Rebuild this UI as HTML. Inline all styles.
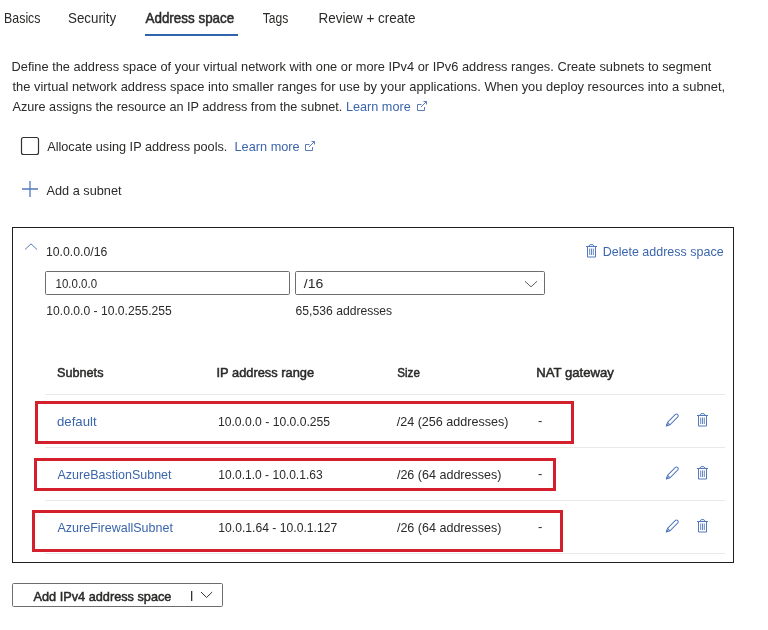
<!DOCTYPE html>
<html><head><meta charset="utf-8"><style>
html,body{margin:0;padding:0;background:#fff;width:768px;height:630px;overflow:hidden}
svg{display:block;will-change:transform;font-family:"Liberation Sans",sans-serif}
</style></head><body>
<svg width="768" height="630" viewBox="0 0 768 630">
<rect x="145" y="34" width="93" height="2" fill="#3064ad"/>
<rect x="21.5" y="137.5" width="17" height="17" rx="2" fill="none" stroke="#323130" stroke-width="1.2"/>
<path d="M22 189 H38 M30 181 V197" stroke="#5279bd" stroke-width="1.3" fill="none"/>
<rect x="12.5" y="227.5" width="721" height="335" fill="none" stroke="#201f1e" stroke-width="1"/>
<path d="M25 249.5 L31 243.8 L37 249.5" stroke="#5279bd" stroke-width="1" fill="none"/>
<rect x="45.5" y="271.5" width="244" height="23" rx="1.2" fill="none" stroke="#6f6d6b" stroke-width="1"/>
<rect x="295.5" y="271.5" width="249" height="23" rx="1.2" fill="none" stroke="#6f6d6b" stroke-width="1"/>
<path d="M525 281.3 L531 286.8 L537 281.3" stroke="#605e5c" stroke-width="1" fill="none"/>
<rect x="45" y="394" width="680" height="1" fill="#e9e9e9"/>
<rect x="45" y="447" width="680" height="1" fill="#e9e9e9"/>
<rect x="45" y="500" width="680" height="1" fill="#e9e9e9"/>
<rect x="45" y="553" width="680" height="1" fill="#e9e9e9"/>
<rect x="36.5" y="402.5" width="536" height="40" fill="none" stroke="#d41f2c" stroke-width="3"/>
<rect x="35.5" y="459.5" width="519" height="30" fill="none" stroke="#d41f2c" stroke-width="3"/>
<rect x="33.5" y="511.5" width="528" height="39" fill="none" stroke="#d41f2c" stroke-width="3"/>
<rect x="12.5" y="583.5" width="210" height="23" rx="1.2" fill="none" stroke="#6f6d6b" stroke-width="1"/>
<rect x="191" y="591" width="1.3" height="10" fill="#323130"/>
<path d="M201 592 L206.6 597.5 L212.2 592" stroke="#323130" stroke-width="1" fill="none"/>
<g transform="translate(586,244)" fill="none" stroke="#5279bd" stroke-width="1">
<path d="M3 2 L4 0.7 H7 L8 2"/><path d="M0 2.5 h11"/><path d="M1.5 2.5 V13 H9.5 V2.5"/>
<path d="M3.7 4.5 V11 M5.5 4.5 V11 M7.3 4.5 V11" stroke-width="0.9"/></g>
<g transform="translate(697,413)" fill="none" stroke="#5279bd" stroke-width="1">
<path d="M3 2 L4 0.7 H7 L8 2"/><path d="M0 2.5 h11"/><path d="M1.5 2.5 V13 H9.5 V2.5"/>
<path d="M3.7 4.5 V11 M5.5 4.5 V11 M7.3 4.5 V11" stroke-width="0.9"/></g>
<g transform="translate(697,466)" fill="none" stroke="#5279bd" stroke-width="1">
<path d="M3 2 L4 0.7 H7 L8 2"/><path d="M0 2.5 h11"/><path d="M1.5 2.5 V13 H9.5 V2.5"/>
<path d="M3.7 4.5 V11 M5.5 4.5 V11 M7.3 4.5 V11" stroke-width="0.9"/></g>
<g transform="translate(697,519)" fill="none" stroke="#5279bd" stroke-width="1">
<path d="M3 2 L4 0.7 H7 L8 2"/><path d="M0 2.5 h11"/><path d="M1.5 2.5 V13 H9.5 V2.5"/>
<path d="M3.7 4.5 V11 M5.5 4.5 V11 M7.3 4.5 V11" stroke-width="0.9"/></g>
<g transform="translate(666.3,426.0) rotate(-45)" fill="none" stroke="#5279bd" stroke-width="1" stroke-linejoin="round">
<path d="M0 0 L3.4 -1.7 H14.6 Q16.2 -1.7 16.2 0 Q16.2 1.7 14.6 1.7 H3.4 Z"/><path d="M3.4 -1.7 V1.7"/><path d="M0.3 0 L2 -0.9 V0.9 Z" fill="#5279bd" stroke-width="0.6"/></g>
<g transform="translate(666.3,479.0) rotate(-45)" fill="none" stroke="#5279bd" stroke-width="1" stroke-linejoin="round">
<path d="M0 0 L3.4 -1.7 H14.6 Q16.2 -1.7 16.2 0 Q16.2 1.7 14.6 1.7 H3.4 Z"/><path d="M3.4 -1.7 V1.7"/><path d="M0.3 0 L2 -0.9 V0.9 Z" fill="#5279bd" stroke-width="0.6"/></g>
<g transform="translate(666.3,532.0) rotate(-45)" fill="none" stroke="#5279bd" stroke-width="1" stroke-linejoin="round">
<path d="M0 0 L3.4 -1.7 H14.6 Q16.2 -1.7 16.2 0 Q16.2 1.7 14.6 1.7 H3.4 Z"/><path d="M3.4 -1.7 V1.7"/><path d="M0.3 0 L2 -0.9 V0.9 Z" fill="#5279bd" stroke-width="0.6"/></g>
<g transform="translate(417,101)" fill="none" stroke="#5d7cb6" stroke-width="1">
<path d="M4.5 3.5 H0.5 V9.5 H7.5 V6"/><path d="M4 6 L9.5 0.5 M6.5 0.5 H9.5 V3.5"/></g>
<g transform="translate(305,141)" fill="none" stroke="#5d7cb6" stroke-width="1">
<path d="M4.5 3.5 H0.5 V9.5 H7.5 V6"/><path d="M4 6 L9.5 0.5 M6.5 0.5 H9.5 V3.5"/></g>
<text transform="translate(4.12,23) scale(0.8823,1)" font-size="14" fill="#2b2a29">Basics</text>
<text transform="translate(68.00,23) scale(0.9541,1)" font-size="14" fill="#2b2a29">Security</text>
<text transform="translate(145.50,23) scale(0.9588,1)" font-size="14" stroke="#2b2a29" stroke-width="0.5" fill="#2b2a29">Address space</text>
<text transform="translate(262.75,23) scale(0.8623,1)" font-size="14" fill="#2b2a29">Tags</text>
<text transform="translate(318.54,23) scale(0.9627,1)" font-size="14" fill="#2b2a29">Review + create</text>
<text transform="translate(11.51,71) scale(0.9870,1)" font-size="13" fill="#2b2a29">Define the address space of your virtual network with one or more IPv4 or IPv6 address ranges. Create subnets to segment</text>
<text transform="translate(12.50,91) scale(0.9918,1)" font-size="13" fill="#2b2a29">the virtual network address space into smaller ranges for use by your applications. When you deploy resources into a subnet,</text>
<text transform="translate(12.50,111) scale(0.9746,1)" font-size="13" fill="#2b2a29">Azure assigns the resource an IP address from the subnet.</text>
<text transform="translate(345.92,111) scale(0.9763,1)" font-size="13" fill="#3b65ac">Learn more</text>
<text transform="translate(47.20,151) scale(0.9762,1)" font-size="13" fill="#2b2a29">Allocate using IP address pools.</text>
<text transform="translate(234.52,151) scale(0.9809,1)" font-size="13" fill="#3b65ac">Learn more</text>
<text transform="translate(46.50,194.5) scale(0.9805,1)" font-size="13" fill="#2b2a29">Add a subnet</text>
<text transform="translate(46.00,255.7) scale(0.9425,1)" font-size="13" fill="#2b2a29">10.0.0.0/16</text>
<text transform="translate(602.74,255.8) scale(0.9622,1)" font-size="13" fill="#3b65ac">Delete address space</text>
<text transform="translate(55.60,288.3) scale(0.8833,1)" font-size="13" fill="#2b2a29">10.0.0.0</text>
<text transform="translate(303.80,288) scale(1.0817,1)" font-size="13" fill="#2b2a29">/16</text>
<text transform="translate(46.25,314.5) scale(0.9347,1)" font-size="13" fill="#2b2a29">10.0.0.0 - 10.0.255.255</text>
<text transform="translate(295.60,314.7) scale(0.9350,1)" font-size="13" fill="#2b2a29">65,536 addresses</text>
<text transform="translate(57.00,377) scale(0.9751,1)" font-size="13" stroke="#2b2a29" stroke-width="0.5" fill="#2b2a29">Subnets</text>
<text transform="translate(216.51,377) scale(0.9895,1)" font-size="13" stroke="#2b2a29" stroke-width="0.5" fill="#2b2a29">IP address range</text>
<text transform="translate(397.30,377) scale(0.8939,1)" font-size="13" stroke="#2b2a29" stroke-width="0.5" fill="#2b2a29">Size</text>
<text transform="translate(536.29,377) scale(1.0109,1)" font-size="13" stroke="#2b2a29" stroke-width="0.5" fill="#2b2a29">NAT gateway</text>
<text transform="translate(57.00,425.5) scale(1.0147,1)" font-size="13" fill="#3b65ac">default</text>
<text transform="translate(217.90,425.5) scale(0.9361,1)" font-size="13" fill="#2b2a29">10.0.0.0 - 10.0.0.255</text>
<text transform="translate(396.70,425.5) scale(0.9680,1)" font-size="13" fill="#2b2a29">/24 (256 addresses)</text>
<text transform="translate(538.00,424.8) scale(1.0000,1)" font-size="13" fill="#2b2a29">-</text>
<text transform="translate(57.50,478.75) scale(0.9629,1)" font-size="13" fill="#3b65ac">AzureBastionSubnet</text>
<text transform="translate(218.30,478.75) scale(0.9260,1)" font-size="13" fill="#2b2a29">10.0.1.0 - 10.0.1.63</text>
<text transform="translate(396.90,478.75) scale(0.9661,1)" font-size="13" fill="#2b2a29">/26 (64 addresses)</text>
<text transform="translate(538.00,477.8) scale(1.0000,1)" font-size="13" fill="#2b2a29">-</text>
<text transform="translate(57.50,531.75) scale(0.9623,1)" font-size="13" fill="#3b65ac">AzureFirewallSubnet</text>
<text transform="translate(218.30,531.75) scale(0.9356,1)" font-size="13" fill="#2b2a29">10.0.1.64 - 10.0.1.127</text>
<text transform="translate(396.90,531.75) scale(0.9661,1)" font-size="13" fill="#2b2a29">/26 (64 addresses)</text>
<text transform="translate(538.00,530.8) scale(1.0000,1)" font-size="13" fill="#2b2a29">-</text>
<text transform="translate(33.50,601) scale(0.9791,1)" font-size="13" stroke="#2b2a29" stroke-width="0.5" fill="#2b2a29">Add IPv4 address space</text>
</svg>
</body></html>
